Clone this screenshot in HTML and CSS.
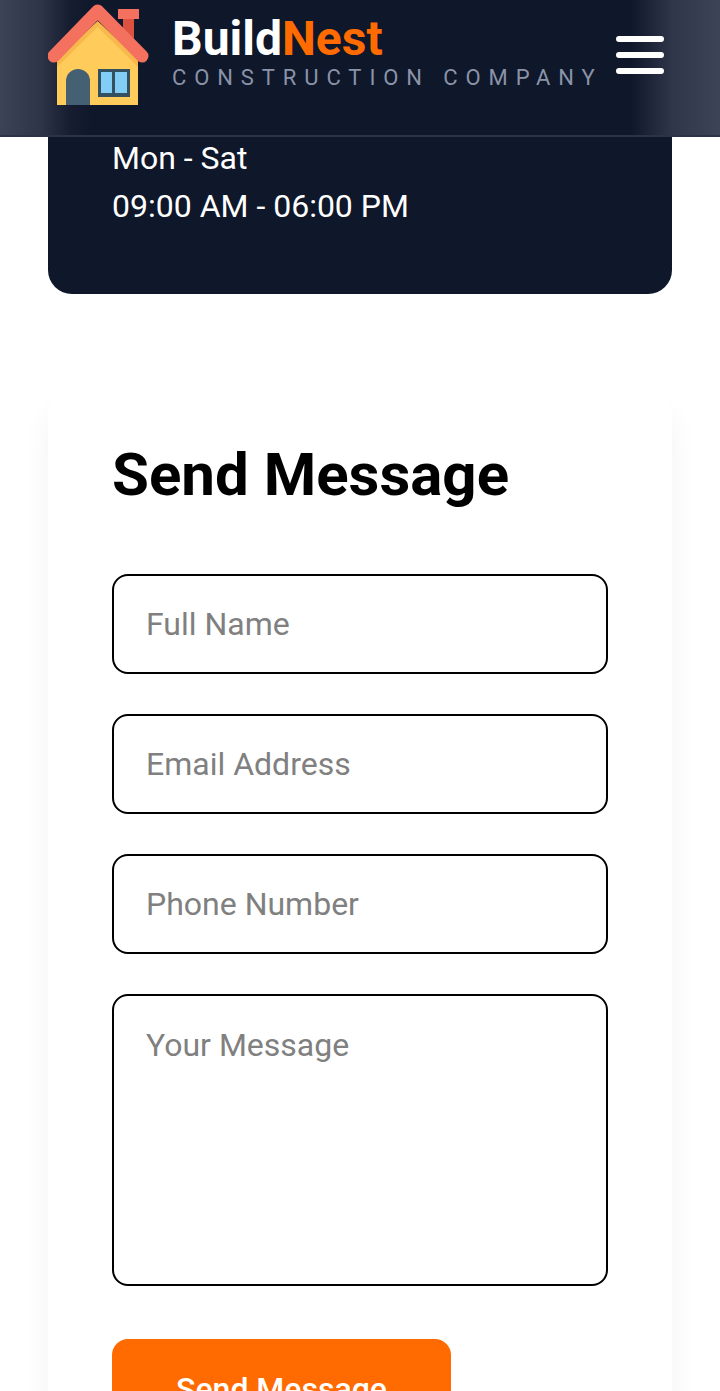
FILE: index.html
```html
<!DOCTYPE html>
<html lang="en">
<head>
<meta charset="utf-8">
<title>BuildNest</title>
<link rel="stylesheet" href="styles.css">
</head>
<body>
<header class="site-header">
  <div class="brand">
    <svg class="logo" viewBox="48 4 101 101" aria-hidden="true">
      <path d="M123 14h11v25l-11-10z" fill="#dd5140"/>
      <rect x="118" y="9" width="21" height="10" fill="#f4715f"/>
      <path d="M57 105V60l40.7-38L138 60v45z" fill="#ffcb5a"/>
      <path d="M57 67 97.700 27 138 67v-8L97.700 21 57 59z" fill="#f8b94c"/>
      <path d="M54 56 97.700 11 142 56" fill="none" stroke="#f4715f" stroke-width="13" stroke-linecap="round" stroke-linejoin="round"/>
      <path d="M66 105V81a12 12 0 0 1 24 0v24z" fill="#456072"/>
      <rect x="98" y="69" width="32" height="28" fill="#32505f"/>
      <rect x="101" y="72" width="11" height="21" fill="#82cdf5"/>
      <rect x="115" y="72" width="12" height="21" fill="#82cdf5"/>
    </svg>
    <div class="brand-text">
      <div class="brand-name">Build<span class="brand-accent">Nest</span></div>
      <div class="brand-sub">CONSTRUCTION COMPANY</div>
    </div>
  </div>
  <button class="menu" aria-label="Menu"><span></span><span></span><span></span></button>
</header>
<main class="page">
  <section class="hours">
    <p>Mon - Sat</p>
    <p>09:00 AM - 06:00 PM</p>
  </section>
  <section class="form-card">
    <h2>Send Message</h2>
    <form class="form">
      <input class="field" type="text" placeholder="Full Name">
      <input class="field" type="email" placeholder="Email Address">
      <input class="field" type="tel" placeholder="Phone Number">
      <textarea class="field area" placeholder="Your Message"></textarea>
      <button class="send" type="button">Send Message</button>
    </form>
  </section>
</main>
</body>
</html>
```
FILE: styles.css
```css
* { box-sizing: border-box; }
html, body { margin: 0; height: 1391px; overflow: hidden; background: #fff; }
body { font-family: Roboto, "Liberation Sans", sans-serif; }
.site-header {
  position: fixed;
  top: 0;
  left: 0;
  right: 0;
  z-index: 10;
  height: 137px;
  padding: 0 56px 0 48px;
  display: flex;
  align-items: flex-start;
  justify-content: space-between;
  background: linear-gradient(90deg, #3c4357 0, #2e3548 40px, #161d30 70px, #0f172a 92px, #0f172a 630px, #181f33 642px, #30364a 672px, #3d4458 720px);
  border-bottom: 2px solid #2b3347;
}
.brand { display: flex; gap: 24px; padding-top: 4px; }
.logo { width: 101px; height: 101px; display: block; flex: none; }
.brand-text { padding-top: 7px; }
.brand-name { font-size: 48px; line-height: 56px; font-weight: 700; color: #fff; margin-left: -1px; }
.brand-accent { color: #ff6b00; }
.brand-sub { font-size: 22px; line-height: 26px; color: #8a93a8; letter-spacing: 7.9px; white-space: nowrap; margin-left: -1px; margin-top: -2px; }
.menu { margin-top: 36px; padding: 0; border: 0; background: none; width: 48px; display: flex; flex-direction: column; gap: 10px; }
.menu span { display: block; height: 6px; border-radius: 3px; background: #fff; }
.page { padding: 0 48px; }
.hours { background: #0f172a; border-radius: 0 0 24px 24px; padding: 134px 64px 0; height: 294px; color: #fff; }
.hours p { margin: 0; font-size: 32px; line-height: 48px; }
.form-card {
  margin-top: 96px;
  background: #fff;
  border-radius: 24px;
  box-shadow: 0 20px 30px rgba(0,0,0,.05);
  padding: 50px 64px 48px;
  height: 1100px;
}
.form-card h2 { margin: 0 0 64px; font-size: 60px; line-height: 70px; font-weight: 700; color: #000; }
.form { display: flex; flex-direction: column; gap: 40px; align-items: flex-start; }
.field {
  display: block;
  width: 100%;
  height: 100px;
  padding: 0 32px;
  border: 2px solid #000;
  border-radius: 16px;
  background: #fff;
  font: 32px/38px Roboto, sans-serif;
  color: #000;
}
.field::placeholder { color: #808080; opacity: 1; }
.area { height: 292px; padding-top: 30px; resize: none; }
.send {
  margin-top: 13px;
  width: 339px;
  height: 100px;
  border: 0;
  border-radius: 16px;
  background: #ff6b00;
  color: #fff;
  font: 500 32px/36px Roboto, sans-serif;
}
```
